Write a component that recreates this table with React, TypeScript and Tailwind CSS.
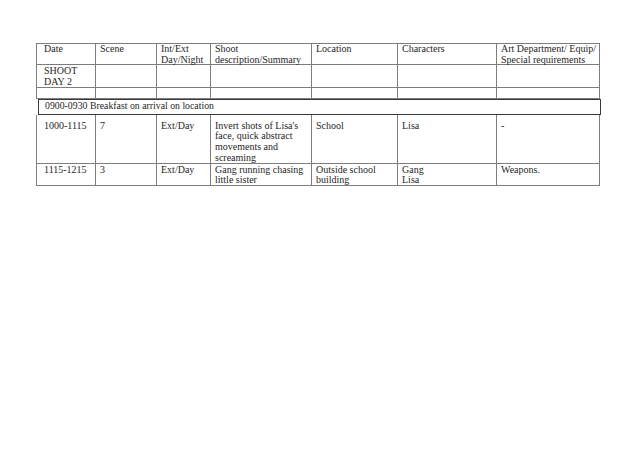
import React from "react";

const cols = "grid grid-cols-[59px_61px_54px_101px_86px_99px_103px]";
const cell = "border-r border-b border-[#7d7d7d] text-[10px] leading-[10.7px] text-[#262626]";

function Row({ cells, h, pt = "pt-[1px]" }: { cells: React.ReactNode[]; h: string; pt?: string }) {
  return (
    <>
      {cells.map((c, i) => (
        <div key={i} className={`${cell} ${h} ${pt} ${i === 0 ? "pl-[7px]" : "pl-[4px]"}`}>
          {c}
        </div>
      ))}
    </>
  );
}

export default function App() {
  return (
    <div className="w-[638px] h-[451px] bg-white" style={{ fontFamily: '"Liberation Serif", serif' }}>
      <div className="pt-[43px] pl-[36px]">
        <div className={`${cols} w-[564px] border-l border-t border-[#7d7d7d]`}>
          <Row
            h="h-[21px]"
            pt="pt-[0px]"
            cells={[
              "Date",
              "Scene",
              <>Int/Ext<br />Day/Night</>,
              <>Shoot<br />description/Summary</>,
              "Location",
              "Characters",
              <>Art Department/ Equip/<br />Special requirements</>,
            ]}
          />
          <Row h="h-[23px]" cells={[<>SHOOT<br />DAY 2</>, "", "", "", "", "", ""]} />
          <Row h="h-[11px]" cells={["", "", "", "", "", "", ""]} />
        </div>
        <div className="ml-[2px] w-[563px] h-[16px] border-[1.5px] border-[#3a3a3a] -mt-[0.5px] pl-[6px] text-[9.8px] leading-[12px] text-[#262626]">
          0900-0930 Breakfast on arrival on location
        </div>
        <div className={`${cols} w-[564px] border-l border-[#7d7d7d]`}>
          <Row
            h="h-[49px]"
            pt="pt-[6px]"
            cells={[
              "1000-1115",
              "7",
              "Ext/Day",
              <>Invert shots of Lisa's face, quick abstract movements and screaming</>,
              "School",
              "Lisa",
              "-",
            ]}
          />
          <Row
            h="h-[22px]"
            pt="pt-[1px]"
            cells={[
              "1115-1215",
              "3",
              "Ext/Day",
              <>Gang running chasing little sister</>,
              <>Outside school building</>,
              <>Gang<br />Lisa</>,
              "Weapons.",
            ]}
          />
        </div>
      </div>
    </div>
  );
}
